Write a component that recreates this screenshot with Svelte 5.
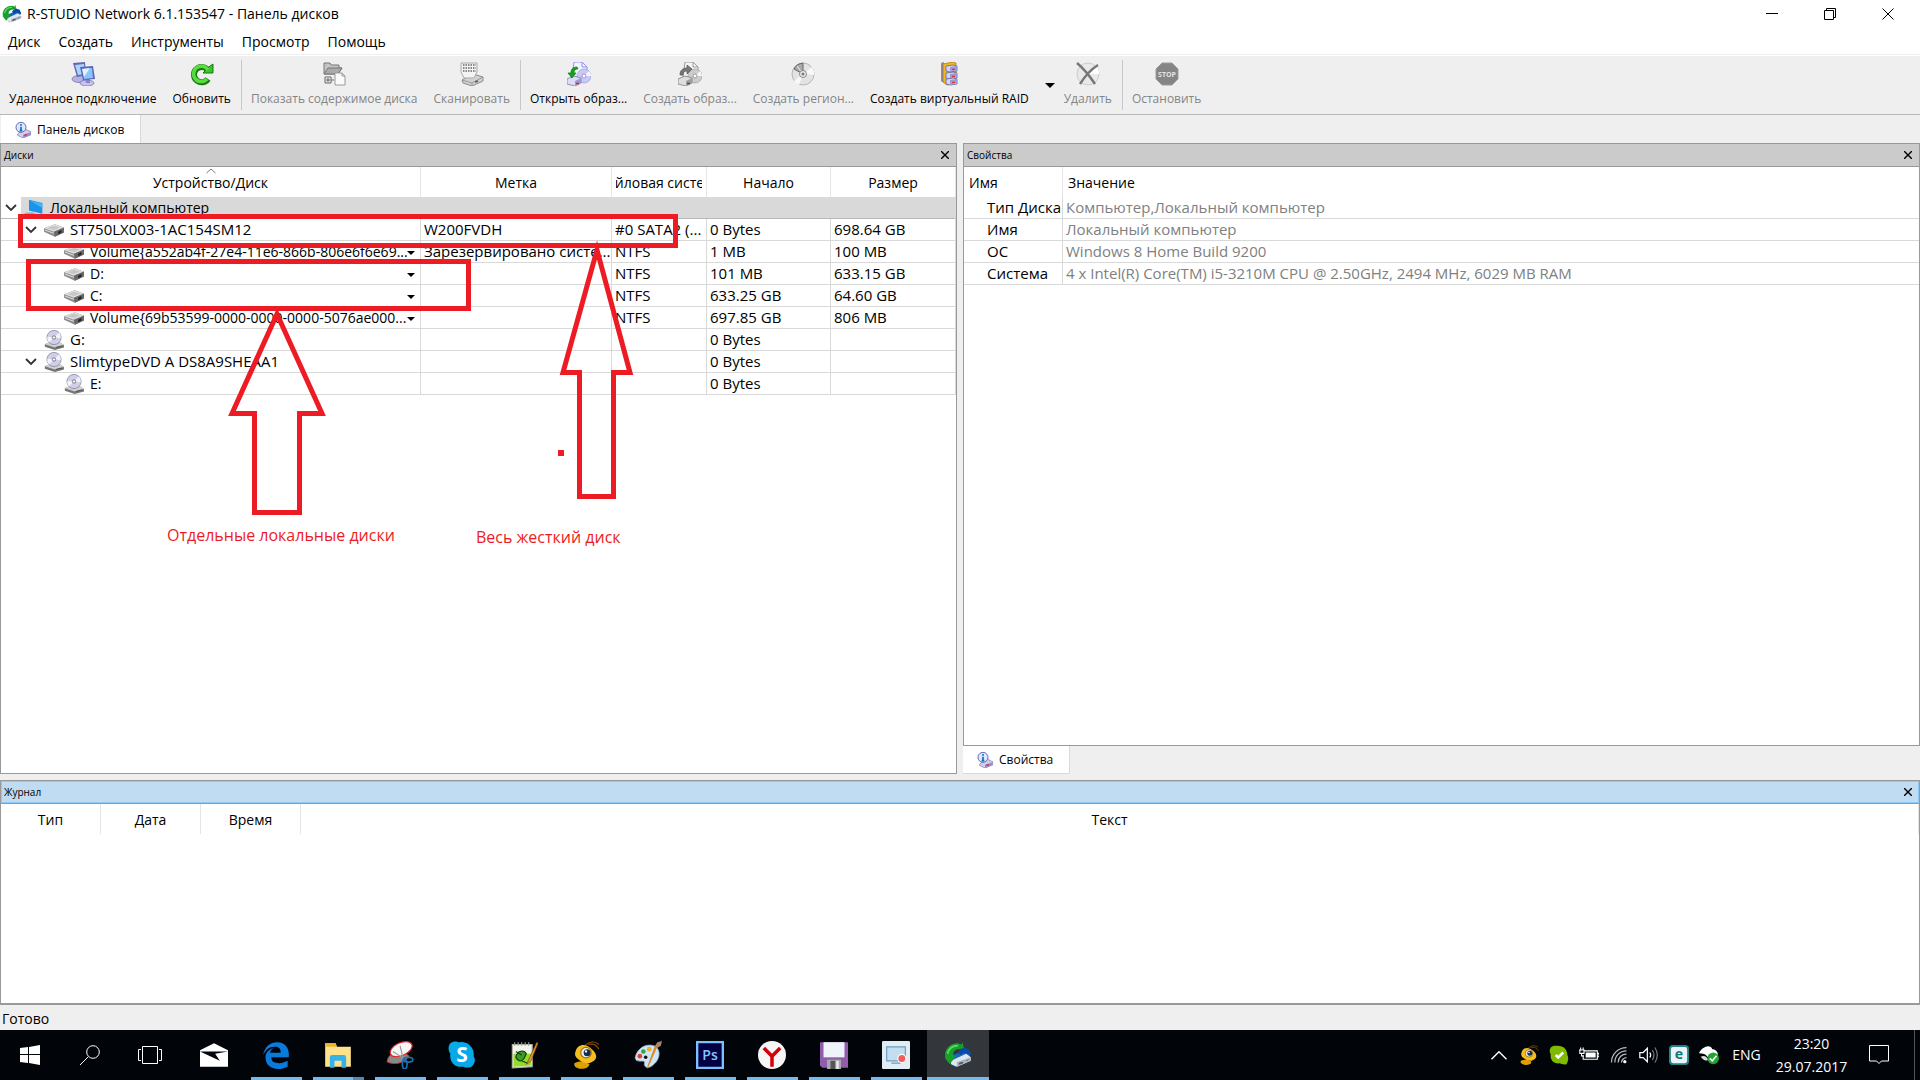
<script lang="ts">
  type Tool = { icon: string; label: string; disabled?: boolean; menu?: boolean };
  type Row = {
    level: number;
    icon: string;
    name: string;
    open?: boolean;
    drop?: boolean;
    label?: string;
    fs?: string;
    start?: string;
    size?: string;
  };

  const menu = ["Диск", "Создать", "Инструменты", "Просмотр", "Помощь"];

  const toolGroups: Tool[][] = [
    [
      { icon: "remote", label: "Удаленное подключение" },
      { icon: "refresh", label: "Обновить" },
    ],
    [
      { icon: "contents", label: "Показать содержимое диска", disabled: true },
      { icon: "scan", label: "Сканировать", disabled: true },
    ],
    [
      { icon: "openImage", label: "Открыть образ..." },
      { icon: "makeImage", label: "Создать образ...", disabled: true },
      { icon: "region", label: "Создать регион...", disabled: true },
      { icon: "raid", label: "Создать виртуальный RAID", menu: true },
      { icon: "remove", label: "Удалить", disabled: true },
    ],
    [{ icon: "stop", label: "Остановить", disabled: true }],
  ];

  const rows: Row[] = [
    { level: 1, icon: "hdd", name: "ST750LX003-1AC154SM12", open: true, label: "W200FVDH", fs: "#0 SATA2 (...", start: "0 Bytes", size: "698.64 GB" },
    { level: 2, icon: "hdd", name: "Volume{a552ab4f-27e4-11e6-866b-806e6f6e69...", drop: true, label: "Зарезервировано систе...", fs: "NTFS", start: "1 MB", size: "100 MB" },
    { level: 2, icon: "hdd", name: "D:", drop: true, fs: "NTFS", start: "101 MB", size: "633.15 GB" },
    { level: 2, icon: "hdd", name: "C:", drop: true, fs: "NTFS", start: "633.25 GB", size: "64.60 GB" },
    { level: 2, icon: "hdd", name: "Volume{69b53599-0000-0000-0000-5076ae000...", drop: true, fs: "NTFS", start: "697.85 GB", size: "806 MB" },
    { level: 1, icon: "dvd", name: "G:", start: "0 Bytes" },
    { level: 1, icon: "dvd", name: "SlimtypeDVD A DS8A9SHEAA1", open: true, start: "0 Bytes" },
    { level: 2, icon: "dvd", name: "E:", start: "0 Bytes" },
  ];

  const props = [
    ["Тип Диска", "Компьютер,Локальный компьютер"],
    ["Имя", "Локальный компьютер"],
    ["ОС", "Windows 8 Home Build 9200"],
    ["Система", "4 x Intel(R) Core(TM) i5-3210M CPU @ 2.50GHz, 2494 MHz, 6029 MB RAM"],
  ];

  const apps = [
    { icon: "mail", title: "Почта" },
    { icon: "edge", title: "Microsoft Edge", running: true },
    { icon: "folder", title: "Проводник", running: true, stacked: true },
    { icon: "snip", title: "Ножницы", running: true },
    { icon: "skype", title: "Skype", running: true },
    { icon: "notepad", title: "Notepad++", running: true },
    { icon: "bee", title: "Download Master", running: true },
    { icon: "paint", title: "Paint", running: true },
    { icon: "ps", title: "Photoshop", running: true },
    { icon: "yandex", title: "Yandex", running: true },
    { icon: "floppy", title: "Total Commander", running: true },
    { icon: "recorder", title: "Запись экрана", running: true },
    { icon: "rstudio", title: "R-STUDIO", running: true, active: true },
  ];

  const tray = ["up", "bee", "online", "battery", "wifi", "volume", "eset", "sync"];
</script>

{#snippet icon(name: string)}
  <svg class="icon {name}" viewBox="0 0 24 24" aria-hidden="true">
    {#if name === "rstudio"}
      <path d="M8 12 21 7l2 4-5 8-9 3-4-4z" fill="#1667c4" />
      <path d="m12 9 4-4 5 2 2 5-6-2-3 2z" fill="#0b49a5" />
      <path d="m6 17 13-6 4 3v3l-12 5-5-2z" fill="#dfe6ee" />
      <path d="m11 18 12-4v3l-12 5z" fill="#aab4c0" />
      <path d="m13 19 3-1v1l-3 1zm6-2 2-1" stroke="#456" stroke-width=".6" fill="#456" />
      <path d="M1 14C0 7 5 2 12 2l3 1 1-2 1 5-4 1C9 7 8 9 8 12l2 1-5 7-4-5z" fill="#18a02c" />
      <path d="M3 11c1-4 4-7 9-7" stroke="#62d85e" stroke-width="1.5" fill="none" />
    {:else if name === "remote"}
      <ellipse cx="8" cy="17" rx="7" ry="3.500" fill="#b3b4e2" stroke="#6b6bb0" stroke-width=".7" />
      <path d="m2 1 12-1 1 13-9 2z" fill="#6566b4" />
      <path d="m4 3 9-1 1 10-7 1z" fill="#a9d6ff" />
      <ellipse cx="16" cy="21" rx="7" ry="3" fill="#c5c5eb" stroke="#6b6bb0" stroke-width=".7" />
      <path d="m14 17 5-1v5h-4z" fill="#8587c9" />
      <path d="m9 5 13-1 2 13-12 1z" fill="#6263b0" />
      <path d="m11 7 10-1 1 10-9 1z" fill="#86c5ff" />
      <path d="m11 7 8-1-6 9z" fill="#dff0ff" />
    {:else if name === "refresh"}
      <path d="M17 7a7.700 7.700 0 1 0 1 10" fill="none" stroke="#157b13" stroke-width="6" />
      <path d="M13 11h10V2l-3 2z" fill="#37c623" stroke="#157b13" />
      <path d="M18 8a7.700 7.700 0 1 0-1 9" fill="none" stroke="#5adb3d" stroke-width="3.600" />
    {:else if name === "contents"}
      <path d="M2 1h6l1 2h8v3h3l-4 6H2z" fill="#c4c4c4" stroke="#777" />
      <path d="M2 12 6 6h14l-4 6z" fill="#aaa" stroke="#777" />
      <path d="M3 15h6v6H3zm1 3h4M6 16v4M9 18h3" fill="none" stroke="#666" />
      <path d="M13 11h7l3 3v9H13z" fill="#fafafa" stroke="#999" />
      <path d="M20 11v3h3" fill="none" stroke="#999" />
    {:else if name === "scan"}
      <path d="m2 18 11-6 10 3v4l-11 5-9-3z" fill="#d1d1d1" stroke="#8d8d8d" />
      <path d="m2 18 10 3 11-6M12 21v3" fill="none" stroke="#999" />
      <path d="M1 1h16v9l-3 6H4l-3-6z" fill="#f4f4f4" stroke="#aaa" />
      <path d="M3 3h13M3 6h13M3 9h13" stroke="#666" stroke-width="1.4" stroke-dasharray="1.5 1" />
      <path d="m15 20 3-1" stroke="#555" stroke-width="1.5" />
    {:else if name === "openImage" || name === "makeImage"}
      <g class:gray={name === "makeImage"}>
        <path d="M7 0h8l5 5v10H5z" fill="#f3f3ff" stroke="#9293e8" />
        <path d="M15 0v5h5" fill="none" stroke="#9293e8" />
        <circle cx="17" cy="14" r="7" fill="#c9c8f6" stroke="#9a99d6" stroke-width=".7" />
        <path d="m17 14 5-5a7 7 0 0 1 2 5z" fill="#f6f4ff" />
        <circle cx="17" cy="14" r="2" fill="#fff" stroke="#9796d2" />
        <path d="m0 17 7-3 7 2v5l-6 3-8-2z" fill="#dcdcf6" stroke="#7b7ca9" stroke-width=".8" />
        <path d="m8 19 6-3v5l-6 3z" fill="#9a9bd0" />
        <path d="M9 21.500h3" stroke="#d22" stroke-width="1.5" />
        {#if name === "openImage"}
          <path d="M10 5C5 5 4 8 4 11H1l4 5 4-5H7c0-3 1-4 4-4z" fill="#15a51a" stroke="#087510" stroke-width=".7" />
        {:else}
          <path d="M2 13c0-5 3-7 7-7V3l5 4-5 5V9c-3 0-4 1-4 4z" fill="#777" stroke="#555" stroke-width=".7" />
        {/if}
      </g>
    {:else if name === "region"}
      <circle cx="12" cy="12" r="11" fill="#e3e3e3" stroke="#b5b5b5" />
      <path d="m12 12 9-7a11 11 0 0 1 2 8zm0 0-9 7a11 11 0 0 0 5 4z" fill="#f8f8f8" />
      <path d="M12 12 3 7q2-5 9-6z" fill="#aaa" stroke="#666" />
      <path d="M12 12 6 4" stroke="#eee" />
      <circle cx="12" cy="12" r="3.500" fill="#eee" stroke="#888" />
      <circle cx="12" cy="12" r="1.500" fill="#777" />
    {:else if name === "raid"}
      <path d="m4 1 3-1v21l-3-2z" fill="#8588c2" />
      <path d="m6 2 10-2 3 1v20l-9 2-4-3z" fill="#f4b61e" stroke="#ad7300" stroke-width=".7" />
      {#each [4, 11, 17] as y}
        <path d="m9 {y} 7-1 4 1v5l-7 1-4-1z" fill="#d1d4f6" stroke="#62659b" stroke-width=".8" />
        <path d="m13 {y + 1} 7-1v4l-7 1z" fill="#989bd8" />
        <path d="M15 {y + 3.5}h3" stroke="#e33030" stroke-width="1.4" />
      {/each}
    {:else if name === "remove"}
      <circle cx="12" cy="12" r="11" fill="#e9e9e9" stroke="#ccc" />
      <path d="m12 12 8-8a11 11 0 0 1 3 8z" fill="#fff" />
      <path d="M1 1c6 5 12 12 18 21M22 3C14 8 9 14 4 22" fill="none" stroke="#777" stroke-width="2.400" />
    {:else if name === "stop"}
      <path d="M7 1h10l6 6v10l-6 6H7l-6-6V7z" fill="#858585" stroke="#9b9b9b" />
      <text x="12" y="15" text-anchor="middle" font-size="7" font-weight="700" fill="#e2e2e2">STOP</text>
    {:else if name === "info"}
      <path d="m4 18 10-8 10 5v4l-12 5-8-4z" fill="#cfd0ef" stroke="#6f70a3" />
      <path d="m12 19 12-4v4l-12 5z" fill="#9295ce" />
      <path d="m14 20 4-1" stroke="#e22" stroke-width="2" />
      <circle cx="9" cy="8" r="7.500" fill="#dcebff" stroke="#666ab2" stroke-width="1.500" />
      <path d="M9 3v2.500M9 7v6M7 13h4" stroke="#126ac6" stroke-width="2.500" />
    {:else if name === "computer"}
      <path d="m6 2 16 4v13L6 15z" fill="#1994e8" />
      <path d="m7 3 15 4v5z" fill="#49b3f5" />
      <path d="m0 18 10-1 6 3-9 3z" fill="#73b5e2" />
    {:else if name === "hdd"}
      <path d="m0 10 13-5 11 4v6l-11 5L0 14z" fill="#8d8d8d" />
      <path d="m0 10 13-5 11 4-12 5z" fill="#dedede" />
      <path d="m4 10 8-3 7 2-7 3z" fill="#c6c6c6" />
      <path d="m12 14 12-5v6l-11 5z" fill="#686868" />
      <path d="m17 14 4-2v3l-4 2z" fill="#222" />
      <path d="m1 12 11 4" stroke="#eee" />
    {:else if name === "dvd"}
      <path d="m1 17 7-3h10l6 4v3l-11 3L1 20z" fill="#777" />
      <path d="m1 17 7-3h10l6 4-11 3z" fill="#d0d0d0" />
      <circle cx="12" cy="9" r="8.500" fill="#cfcfea" stroke="#8a8aa2" />
      <path d="m12 9 6-6a8 8 0 0 1 2 7zm0 0-6 6a8 8 0 0 1-2-7z" fill="#f3f3ff" />
      <circle cx="12" cy="9" r="2" fill="#fff" stroke="#666" />
      <path d="m14 21 8-2" stroke="#444" />
    {:else if name === "mail"}
      <path d="m12 2 12 6v14H0V8z" fill="#fff" />
      <path d="m0 9 17 8-4-6 11-2z" fill="#02050b" />
    {:else if name === "edge"}
      <path d="M1 12C2 5 7 1 13 1c7 0 10 5 10 10v3H8c0 4 3 5 7 5 3 0 5-1 7-2v5c-2 1-5 2-8 2C7 24 3 20 3 14c0-4 3-7 7-8-2 1-3 3-3 4h9c0-3-1-5-5-5-5 0-8 3-10 7z" fill="#087bdc" />
    {:else if name === "folder"}
      <path d="M1 2h9l1 3h12v17H1z" fill="#ffe28b" />
      <path d="M1 2h9l1 3H1z" fill="#efb526" />
      <path d="M5 23v-9q0-2 2-2h10q2 0 2 2v9h-4v-6H9v6z" fill="#35b2e8" />
    {:else if name === "snip"}
      <path d="M1 18C1 13 6 9 13 8l7 5c-5 6-12 8-19 5z" fill="#888" stroke="#c33" stroke-width=".7" />
      <ellipse cx="13" cy="7" rx="10" ry="5.500" transform="rotate(-24 13 7)" fill="#f7f7f7" stroke="#d22" />
      <path d="m12 4 3 12M6 9l9 6" stroke="#999" />
      <ellipse cx="19" cy="16" rx="4" ry="2" fill="none" stroke="#1a6fad" stroke-width="1.500" />
      <ellipse cx="16" cy="20" rx="2" ry="4" fill="none" stroke="#1a6fad" stroke-width="1.500" />
    {:else if name === "skype"}
      <path d="M2 2c3-3 7-1 8-1 7-1 13 5 12 12 2 3 1 7-2 9-2 1-5 1-7 0C6 23 1 18 2 11 0 8 0 4 2 2z" fill="#08a9e8" />
      <text x="12" y="18" text-anchor="middle" font-size="18" font-weight="700" fill="#fff">S</text>
    {:else if name === "notepad"}
      <path d="M2 3h17v19l-17 1z" fill="#f1f4ed" stroke="#b1b1a0" />
      <path d="M3 11h15v10l-15 1z" fill="#91dc24" />
      <path d="M4 1v3m3-3v3m3-3v3m3-3v3m3-3v3" stroke="#999" />
      <path d="M5 14c1-6 7-7 9-3l-2 4c-2 3-5 3-7-1zm5 3 5 2M5 9l5 3" fill="#3b9b25" stroke="#173d13" />
      <path d="M23 1 15 18l-1 2 4-3 6-15z" fill="#e59a30" stroke="#7b4616" stroke-width=".6" />
    {:else if name === "bee"}
      <path d="M11 4c4-4 9-4 12-1M14 3c4-1 7 0 9 4" fill="none" stroke="#824b0c" />
      <path d="M2 19c4-2 8-2 13 1-1 5-11 5-13 1z" fill="#dda000" />
      <path d="M3 9C5 2 12 2 17 7c5 4 5 9 0 11-3 2-8 1-11-2-3-2-4-4-3-7z" fill="#f5bd1e" />
      <circle cx="12" cy="10" r="4.500" fill="#eee" stroke="#987200" />
      <circle cx="13" cy="10" r="3" fill="#172c50" />
      <circle cx="12" cy="9" r="1" fill="#fff" />
    {:else if name === "paint"}
      <path d="M1 14C3 6 10 2 17 4c7 3 5 12 0 16-5 5-9 2-8-1 1-4-8 1-8-5z" fill="#cce6f6" stroke="#8eabc0" stroke-width=".7" />
      <circle cx="5" cy="13" r="2" fill="#e34227" /><circle cx="8" cy="9" r="2" fill="#35a546" />
      <circle cx="13" cy="7" r="2" fill="#f1b126" /><circle cx="10" cy="14" r="1.500" fill="#111" />
      <path d="M20 5 12 23l-1 1 1-4 6-16z" fill="#e58525" />
      <path d="m18 4 2-3 4-1-1 4-3 2z" fill="#a6866d" />
    {:else if name === "ps"}
      <path d="M1 1h22v22H1z" fill="#030044" stroke="#7bc0ff" stroke-width="2" />
      <text x="12" y="16" text-anchor="middle" font-size="12" font-weight="600" fill="#80c7ff">Ps</text>
    {:else if name === "yandex"}
      <circle cx="12" cy="12" r="12" fill="#f6f6f6" />
      <path d="m5 6 7 7 7-7m-7 7v9" fill="none" stroke="#d4000b" stroke-width="3" />
    {:else if name === "floppy"}
      <path d="M0 1h24v22H2l-2-2z" fill="#915cac" />
      <path d="M3 1h18v13H3z" fill="#eef4f7" /><path d="M6 16h12v8H6z" fill="#a8a8ac" />
      <path d="M9 17h4v7H9z" fill="#555" /><path d="M14 17h2v7h-2z" fill="#eee" />
    {:else if name === "recorder"}
      <rect width="24" height="24" rx="1" fill="#e1edf5" />
      <path d="M4 5h16v12H4zm4 14h8" fill="#c4ddef" stroke="#6e9bc0" />
      <circle cx="17" cy="15" r="3.500" fill="#f25d5d" stroke="#fff" />
    {:else if name === "up"}
      <path d="m3 17 9-9 9 9" fill="none" stroke="#fff" stroke-width="1.700" />
    {:else if name === "online"}
      <path d="M2 3c3-3 7-2 8-2 8 0 12 5 12 11 2 3 1 8-1 11-3 1-6 0-8-1C6 23 1 18 2 11 0 8 1 5 2 3z" fill="#7fba00" />
      <path d="m8 12 3 3 6-6" fill="none" stroke="#fff" stroke-width="3" />
    {:else if name === "battery"}
      <path d="M6 7h16v10H5v-4M22 10h2v4h-2M0 6h6v4H1V6m1 0V3m3 3V3M3 10v3h3" fill="none" stroke="#fff" stroke-width="1.300" />
      <path d="M8 9h12v6H8z" fill="#fff" />
    {:else if name === "wifi"}
      <path d="M3 21C3 11 11 3 21 3M7 21c0-8 6-14 14-14M11 21c0-6 4-10 10-10M15 21c0-3 3-6 6-6" fill="none" stroke="#bbb" stroke-width="1.500" />
      <circle cx="19" cy="20" r="2" fill="#fff" />
    {:else if name === "volume"}
      <path d="M1 9h4l5-5v16l-5-5H1zM13 9q2 3 0 6" fill="none" stroke="#fff" stroke-width="1.500" />
      <path d="M16 6q4 6 0 12M19 3q6 9 0 18" fill="none" stroke="#777" stroke-width="1.500" />
    {:else if name === "eset"}
      <rect x="1" y="1" width="22" height="22" rx="4" fill="#e9f5f5" stroke="#257f86" stroke-width="2.500" />
      <text x="12" y="17" text-anchor="middle" font-size="17" font-weight="700" fill="#11767c">e</text>
    {:else if name === "sync"}
      <path d="M0 10C3 3 13-2 16 5c5 0 8 5 6 9H10c-2-3-5-4-10-4z" fill="#fff" />
      <path d="M2 14c5-2 7 0 9 4-4 2-6-1-9-4z" fill="#ddd" />
      <circle cx="17" cy="16" r="7" fill="#23a333" />
      <path d="m13 16 3 3 5-6" fill="none" stroke="#fff" stroke-width="2" />
    {/if}
  </svg>
{/snippet}

{#snippet close(label: string)}
  <button class="close" aria-label={label}>
    <svg viewBox="0 0 8 8"><path d="m0 0 8 8M8 0 0 8" stroke="#000" stroke-width="1.400" /></svg>
  </button>
{/snippet}

{#snippet chevron()}
  <svg class="chevron" viewBox="0 0 12 7"><path d="m1 1 5 5 5-5" fill="none" stroke="#333" stroke-width="1.800" /></svg>
{/snippet}

<div class="desktop">
  <header class="titlebar">
    {@render icon("rstudio")}
    <h1>R-STUDIO Network 6.1.153547 - Панель дисков</h1>
    <button aria-label="Свернуть"><svg viewBox="0 0 12 12"><path d="M0 5.500h12" /></svg></button>
    <button aria-label="Восстановить"><svg viewBox="0 0 12 12"><path d="M.5 2.500h9v9h-9zM2.500 2.500v-2h9v9h-2" /></svg></button>
    <button aria-label="Закрыть"><svg viewBox="0 0 12 12"><path d="m.5.500 11 11m0-11-11 11" /></svg></button>
  </header>

  <nav class="menu">
    {#each menu as item}<button>{item}</button>{/each}
  </nav>

  <div class="toolbar">
    {#each toolGroups as group}
      <div class="group">
        {#each group as tool}
          <button class="tool" disabled={tool.disabled}>
            {@render icon(tool.icon)}
            <span>{tool.label}</span>
          </button>
          {#if tool.menu}
            <button class="more" aria-label="Варианты RAID"></button>
          {/if}
        {/each}
      </div>
    {/each}
  </div>

  <div class="tabs">
    <button class="tab">{@render icon("info")}Панель дисков</button>
  </div>

  <main>
    <section class="panel">
      <div class="caption"><h2>Диски</h2>{@render close("Закрыть диски")}</div>
      <div class="body">
        <table class="disks">
          <colgroup>
            <col /><col class="c-label" /><col class="c-fs" /><col class="c-start" /><col class="c-size" />
          </colgroup>
          <thead>
            <tr>
              <th>
                <svg class="sort" viewBox="0 0 10 6"><path d="m.5 5 4.500-4 4.500 4" fill="none" stroke="#777" /></svg>
                <span>Устройство/Диск</span>
              </th>
              <th><span>Метка</span></th>
              <th><span>Файловая система</span></th>
              <th><span>Начало</span></th>
              <th><span>Размер</span></th>
            </tr>
          </thead>
          <tbody>
            <tr class="root">
              <td colspan="5">
                <div class="node">
                  <span class="twist">{@render chevron()}</span>
                  <span class="selected">{@render icon("computer")}<span class="name">Локальный компьютер</span></span>
                </div>
              </td>
            </tr>
            {#each rows as row}
              <tr>
                <td>
                  <div class="node" class:deep={row.level === 2}>
                    <span class="twist">{#if row.open}{@render chevron()}{/if}</span>
                    {@render icon(row.icon)}
                    <span class="name">{row.name}</span>
                    {#if row.drop}<i class="drop"></i>{/if}
                  </div>
                </td>
                <td>{row.label ?? ""}</td>
                <td>{row.fs ?? ""}</td>
                <td>{row.start}</td>
                <td>{row.size ?? ""}</td>
              </tr>
            {/each}
          </tbody>
        </table>
      </div>
    </section>

    <div class="side">
      <section class="panel">
        <div class="caption"><h2>Свойства</h2>{@render close("Закрыть свойства")}</div>
        <div class="body">
          <table class="props">
            <colgroup><col class="c-key" /><col /></colgroup>
            <thead>
              <tr><th>Имя</th><th>Значение</th></tr>
            </thead>
            <tbody>
              {#each props as [key, value]}
                <tr><td>{key}</td><td>{value}</td></tr>
              {/each}
            </tbody>
          </table>
        </div>
      </section>
      <button class="tab">{@render icon("info")}Свойства</button>
    </div>

    <section class="panel journal">
      <div class="caption active"><h2>Журнал</h2>{@render close("Закрыть журнал")}</div>
      <div class="body">
        <table class="log">
          <colgroup><col class="c-log" /><col class="c-log" /><col class="c-log" /><col /></colgroup>
          <thead>
            <tr><th>Тип</th><th>Дата</th><th>Время</th><th>Текст</th></tr>
          </thead>
        </table>
      </div>
    </section>
  </main>

  <footer class="status">Готово</footer>

  <div class="taskbar">
    <button class="sys" aria-label="Пуск">
      <svg viewBox="0 0 20 20"><path class="logo" d="m0 3 8-1v7H0zm9-1 11-2v9H9zM0 10h8v8l-8-1zm9 0h11v10L9 18z" /></svg>
    </button>
    <button class="sys" aria-label="Поиск">
      <svg viewBox="0 0 20 20"><path d="m0 20 8-8" /><circle cx="13" cy="7" r="6.300" /></svg>
    </button>
    <button class="sys" aria-label="Представление задач">
      <svg class="wide" viewBox="0 0 24 20"><path d="M4.500 1.500h15v17h-15zM3 4.500H.5v11H3m18-11h2.500v11H21" /></svg>
    </button>
    <div class="apps">
      {#each apps as app}
        <button class="app" class:running={app.running} class:active={app.active} class:stacked={app.stacked} aria-label={app.title}>
          {@render icon(app.icon)}
        </button>
      {/each}
    </div>
    <div class="tray">
      {#each tray as item}
        <span>{@render icon(item)}</span>
      {/each}
      <button class="lang">ENG</button>
      <time><span>23:20</span><span>29.07.2017</span></time>
      <button class="notify" aria-label="Уведомления">
        <svg viewBox="0 0 20 20"><path d="M.5.500h19v15.500h-7L10 18.500 7.500 16h-7z" /></svg>
      </button>
      <button class="peek" aria-label="Свернуть все окна"></button>
    </div>
  </div>

  <svg class="marks" viewBox="0 0 700 570" aria-label="Пометки">
    <path d="M20.500 216.500h655v29h-655zM28.500 261.500h440v47h-440z" />
    <path d="M277 314 322 413.500H299.500v99h-45v-99H232z" />
    <path d="M597 250 630 372.500H613.500v124h-34v-124H563z" />
    <rect x="558" y="450" width="6" height="6" />
    <text x="167" y="541">Отдельные локальные диски</text>
    <text x="476" y="543">Весь жесткий диск</text>
  </svg>
</div>

<style>
  :global(body) {
    background: #efefef;
  }

  .desktop {
    position: relative;
    display: flex;
    flex-direction: column;
    min-height: 100vh;
    overflow: hidden;
    font: 14px/20px "Open Sans", "Noto Sans", sans-serif;
    color: #000;
    background: #efefef;
  }

  button {
    margin: 0;
    padding: 0;
    border: 0;
    background: none;
    color: inherit;
    font: inherit;
  }

  h1,
  h2 {
    margin: 0;
    font: inherit;
  }

  svg {
    display: block;
    flex: none;
  }

  .icon {
    width: 20px;
    height: 20px;
  }

  .gray {
    filter: grayscale(1);
  }

  .titlebar {
    display: flex;
    align-items: center;
    height: 28px;
    padding: 0 3px 0 2px;
    background: #fff;
  }

  .titlebar h1 {
    flex: 1;
    padding-left: 5px;
  }

  .titlebar button {
    display: grid;
    place-items: center;
    width: 58px;
    height: 28px;
  }

  .titlebar button svg {
    width: 12px;
    height: 12px;
    fill: none;
    stroke: #000;
  }

  .menu {
    display: flex;
    gap: 2px;
    height: 28px;
    box-sizing: border-box;
    background: linear-gradient(#fff 26px, #efefef 26px, #efefef 27px, #fff 27px);
  }

  .menu button {
    padding: 0 8px;
  }

  .toolbar {
    display: flex;
    height: 59px;
    box-sizing: border-box;
    border-bottom: 1px solid #b7b7b7;
    font-size: 12px;
    line-height: 18px;
  }

  .group {
    display: flex;
    gap: 1px;
    margin: 4px 0;
    padding: 0 3px 0 1px;
  }

  .group + .group {
    border-left: 1px solid #c8c8c8;
  }

  .tool {
    display: flex;
    flex-direction: column;
    align-items: center;
    gap: 4px;
    padding: 2px 7px 0 8px;
    white-space: nowrap;
  }

  .tool .icon {
    width: 24px;
    height: 24px;
  }

  .tool:disabled {
    color: #858585;
  }

  .more {
    padding: 0 0 0 8px;
  }

  .more::after,
  .drop {
    display: block;
    border: 4px solid transparent;
    border-top-color: #000;
    border-bottom: 0;
    content: "";
  }

  .more::after {
    border-width: 5px 5px 0;
  }

  .tab {
    display: flex;
    align-items: center;
    gap: 6px;
    height: 28px;
    padding: 1px 16px 0 14px;
    border-right: 1px solid #d9d9d9;
    background: #fff;
    font-size: 12px;
  }

  .tab .icon {
    width: 16px;
    height: 16px;
  }

  .tabs {
    display: flex;
    padding-left: 1px;
  }

  main {
    flex: 1;
    display: grid;
    grid-template-columns: 1fr 1fr;
    grid-template-rows: 631fr 225fr;
    gap: 6px;
  }

  .panel {
    display: flex;
    flex-direction: column;
    min-width: 0;
    border: 1px solid #999;
    background: #fff;
  }

  .side {
    display: flex;
    flex-direction: column;
    align-items: flex-start;
    min-width: 0;
  }

  .side .panel {
    flex: 1;
    align-self: stretch;
  }

  .side .tab {
    border-bottom: 1px solid #d9d9d9;
  }

  .journal {
    grid-column: 1 / -1;
    border-bottom-width: 2px;
  }

  .caption {
    display: flex;
    align-items: center;
    justify-content: space-between;
    height: 22px;
    padding: 0 7px 0 3px;
    border-bottom: 1px solid #999;
    background: #cbcbcb;
    font-size: 10px;
  }

  .caption.active {
    background: #c0dcf3;
    box-shadow: inset 0 0 0 1px #90c8f6;
  }

  .close svg {
    width: 8px;
    height: 8px;
  }

  .body {
    flex: 1;
  }

  table {
    width: 100%;
    table-layout: fixed;
    border-spacing: 0;
    font-size: 15px;
    line-height: 21px;
  }

  th,
  td {
    box-sizing: border-box;
    padding: 0;
    white-space: nowrap;
    overflow: hidden;
    border-right: 1px solid #d9d9d9;
  }

  th {
    position: relative;
    height: 30px;
    border-right-color: #e5e5e5;
    font-size: 14px;
    font-weight: 400;
  }

  td {
    height: 22px;
    padding: 0 3px;
    border-bottom: 1px solid #d9d9d9;
  }

  .disks th span {
    display: flex;
    justify-content: center;
    margin: 0 4px;
    overflow: hidden;
  }

  .sort {
    position: absolute;
    top: 1px;
    left: calc(50% - 5px);
    width: 10px;
    height: 6px;
  }

  .disks td:first-child {
    padding: 0;
  }

  .c-label { width: 191px; }
  .c-fs { width: 95px; }
  .c-start { width: 124px; }
  .c-size { width: 125px; }
  .c-key { width: 99px; }
  .c-log { width: 100px; }

  .node {
    position: relative;
    display: flex;
    align-items: center;
    height: 21px;
    padding-left: 20px;
  }

  .node.deep {
    padding-left: 40px;
  }

  .node .icon {
    margin: 0 6px 0 3px;
  }

  .root .name,
  .deep .name {
    font-size: 14px;
  }

  .twist {
    flex: none;
    display: grid;
    place-items: center;
    width: 20px;
  }

  .chevron {
    width: 12px;
    height: 7px;
  }

  .root .node {
    padding-left: 0;
  }

  .root td {
    border-bottom-color: #b9b9b9;
  }

  .selected {
    flex: 1;
    display: flex;
    align-items: center;
    background: #d9d9d9;
  }

  .drop {
    position: absolute;
    right: 5px;
    top: 10px;
  }

  .props th {
    padding-left: 5px;
    text-align: left;
  }

  .props td:first-child {
    padding-left: 23px;
    padding-right: 0;
  }

  .props td:last-child {
    color: #808080;
  }

  .props tr > :last-child {
    border-right: 0;
  }

  .status {
    height: 25px;
    padding-left: 2px;
    line-height: 28px;
  }

  .taskbar {
    display: flex;
    height: 50px;
    background: #010409;
    color: #fff;
  }

  .taskbar button {
    display: grid;
    place-items: center;
  }

  .sys {
    width: 60px;
  }

  .sys svg,
  .notify svg {
    width: 20px;
    height: 20px;
    fill: none;
    stroke: #fff;
    stroke-width: 1;
  }

  .sys svg.wide {
    width: 24px;
  }

  .sys .logo {
    fill: #fff;
    stroke: none;
  }

  .apps {
    flex: 1;
    display: flex;
    padding-left: 3px;
  }

  .app {
    width: 62px;
    box-sizing: border-box;
    background-repeat: no-repeat;
    background-position: 6px 47px;
    background-size: 51px 3px;
  }

  .app .icon {
    width: 28px;
    height: 28px;
  }

  .app.running {
    background-image: linear-gradient(#76b9ed, #76b9ed);
  }

  .app.stacked {
    background-image: linear-gradient(90deg, #76b9ed 40px, #5687ad 40px);
  }

  .app.active {
    background-color: #33363a;
    background-position: 0 47px;
    background-size: 62px 3px;
  }

  .app .mail {
    width: 30px;
  }

  .tray {
    display: flex;
    align-items: center;
  }

  .tray > span {
    display: grid;
    place-items: center;
    width: 30px;
  }

  .lang {
    width: 45px;
  }

  time {
    display: flex;
    flex-direction: column;
    align-items: center;
    gap: 3px;
    width: 85px;
  }

  .notify {
    width: 50px;
  }

  .peek {
    align-self: stretch;
    width: 6px;
    margin-left: 10px;
    border-left: 1px solid #555;
  }

  .marks {
    position: absolute;
    left: 0;
    top: 0;
    width: 700px;
    height: 570px;
    pointer-events: none;
    font-size: 16px;
    fill: #ed1c24;
  }

  .marks path {
    fill: none;
    stroke: #ed1c24;
    stroke-width: 5;
  }
</style>
